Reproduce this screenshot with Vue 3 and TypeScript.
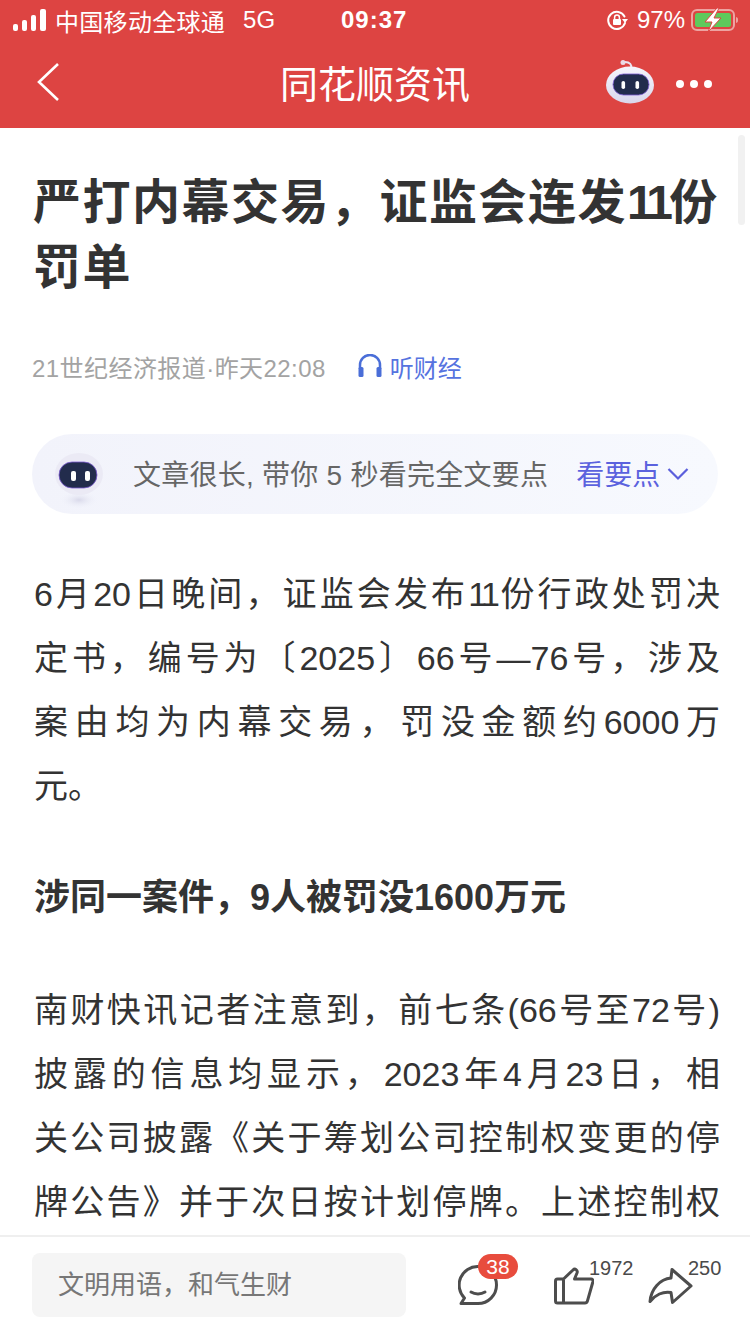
<script setup lang="ts">
const sections: { bold?: boolean; lines: string[] }[] = [
  {
    lines: [
      '6月20日晚间，证监会发布11份行政处罚决',
      '定书，编号为〔2025〕66号—76号，涉及',
      '案由均为内幕交易，罚没金额约6000万',
      '元。',
    ],
  },
  { bold: true, lines: ['涉同一案件，9人被罚没1600万元'] },
  {
    lines: [
      '南财快讯记者注意到，前七条(66号至72号)',
      '披露的信息均显示，2023年4月23日，相',
      '关公司披露《关于筹划公司控制权变更的停',
      '牌公告》并于次日按计划停牌。上述控制权',
    ],
  },
]

const isShort = (line: string) => line.length < 5
// "11" sets much tighter than the other digits in the reference
const parts = (line: string) => line.split(/(11)/)
</script>

<template>
  <div class="page">
    <header class="top">
      <div class="status">
        <div class="status-left">
          <svg class="signal" width="34" height="22" viewBox="0 0 34 22" fill="#fff">
            <rect x="0" y="15" width="5" height="7" rx="2" />
            <rect x="9" y="11" width="5" height="11" rx="2" />
            <rect x="18" y="6" width="5" height="16" rx="2" />
            <rect x="27" y="0" width="6" height="22" rx="2" />
          </svg>
          <span class="carrier">中国移动全球通</span>
          <span class="net">5G</span>
        </div>
        <span class="time">09:37</span>
        <div class="status-right">
          <svg class="lock" width="22" height="22" viewBox="0 0 22 22" fill="none">
            <path d="M18.500 7.500A8.600 8.600 0 1 0 19 14" stroke="#fff" stroke-width="2" stroke-linecap="round" />
            <path d="M16 10h6l-3 4z" fill="#fff" />
            <rect x="7" y="10" width="8" height="6" rx="1" fill="#fff" />
            <path d="M8.600 10V8.400a2.400 2.400 0 0 1 4.800 0V10" stroke="#fff" stroke-width="1.500" />
          </svg>
          <span class="pct">97%</span>
          <svg class="battery" width="48" height="24" viewBox="0 0 48 24" fill="none">
            <rect x="1" y="2" width="42" height="20" rx="5" stroke="#eda3a1" stroke-width="2" />
            <rect x="4" y="5" width="36" height="14" rx="2.500" fill="#5ec95c" />
            <path d="M45 9c1.800.4 2 1.500 2 3s-.2 2.600-2 3z" fill="#eda3a1" />
            <path d="M26 0 14 14h7l-4 10 13-14h-7l5-10z" fill="#fff" stroke="#dd4442" stroke-width="1" />
          </svg>
        </div>
      </div>
      <nav class="nav">
        <svg class="back" width="24" height="40" viewBox="0 0 24 40" fill="none">
          <path d="M22 2 3 20l19 18" stroke="#fff" stroke-width="2.600" />
        </svg>
        <h1 class="nav-title">同花顺资讯</h1>
        <div class="nav-right">
          <svg class="robot-small" width="48" height="44" viewBox="0 0 48 44">
            <defs>
              <linearGradient id="shell" x1="0" y1="0" x2="0" y2="1">
                <stop offset="0" stop-color="#f7f5fc" />
                <stop offset="1" stop-color="#d9d7ec" />
              </linearGradient>
            </defs>
            <path d="M25 8c1-3-1-6-6-6" stroke="#e9e5f2" stroke-width="2" fill="none" />
            <circle cx="17" cy="2.500" r="2.500" fill="#ecd9e4" />
            <ellipse cx="24" cy="25" rx="24" ry="18.500" fill="url(#shell)" />
            <rect x="7" y="14" width="36" height="21" rx="10.500" fill="#222c4c" stroke="#7b5bd0" stroke-width="0.800" />
            <rect x="15.500" y="21" width="3.600" height="8" rx="1.800" fill="#fff" />
            <rect x="29.500" y="21" width="3.600" height="8" rx="1.800" fill="#fff" />
          </svg>
          <div class="dots"><i></i><i></i><i></i></div>
        </div>
      </nav>
    </header>

    <main class="content">
      <div class="scrollbar"></div>
      <h2 class="title">严打内幕交易，证监会连发<span class="num">11</span>份<br />罚单</h2>
      <div class="meta">
        <span class="source">21世纪经济报道·昨天22:08</span>
        <svg class="phones" width="26" height="24" viewBox="0 0 26 24" fill="none">
          <path d="M3 15v-4a10 10 0 0 1 20 0v4" stroke="#4a6ed8" stroke-width="2.500" />
          <rect x="1.500" y="13" width="5" height="10" rx="1.500" fill="#4a6ed8" />
          <rect x="19.500" y="13" width="5" height="10" rx="1.500" fill="#4a6ed8" />
        </svg>
        <span class="listen">听财经</span>
      </div>

      <div class="summary">
        <svg class="robot-faint" width="48" height="62" viewBox="0 0 48 62">
          <defs>
            <radialGradient id="halo" cx="0.5" cy="0.5" r="0.5">
              <stop offset="0" stop-color="#d9d9ea" />
              <stop offset="1" stop-color="#f2f4fc" stop-opacity="0" />
            </radialGradient>
          </defs>
          <ellipse cx="24" cy="50" rx="20" ry="9" fill="url(#halo)" />
          <ellipse cx="24" cy="24" rx="24" ry="21" fill="#ebeaf5" />
          <rect x="4" y="12" width="38" height="26" rx="13" fill="#222c4c" stroke="#7b5bd0" stroke-width="0.800" />
          <rect x="16" y="21" width="5" height="10" rx="2" fill="#fff" />
          <rect x="30" y="21" width="5" height="10" rx="2" fill="#fff" />
        </svg>
        <span class="summary-text">文章很长, 带你 5 秒看完全文要点</span>
        <span class="summary-link">看要点</span>
        <svg class="chev" width="22" height="14" viewBox="0 0 22 14" fill="none">
          <path d="M1.500 2 11 11.500 20.500 2" stroke="#5b5fdc" stroke-width="2.200" />
        </svg>
      </div>

      <article class="article">
        <section v-for="(s, si) in sections" :key="si" class="para" :class="{ bold: s.bold }">
          <div
            v-for="(line, i) in s.lines"
            :key="i"
            class="line"
            :class="{ last: s.bold || isShort(line) }"
          ><span v-for="(p, pi) in parts(line)" :key="pi" :class="{ num: p === '11' }">{{ p }}</span></div>
        </section>
      </article>
    </main>

    <footer class="bar">
      <div class="input">文明用语，和气生财</div>
      <div class="action comment">
        <svg width="42" height="41" viewBox="0 0 42 41" fill="none">
          <path d="M20 1.500a18.500 18.500 0 1 1 0 37H3l3.500-5.500A18.500 18.500 0 0 1 20 1.500z" stroke="#4d4d4d" stroke-width="3" stroke-linejoin="round" />
          <path d="M13 27c4 2.500 10 2.500 14 0" stroke="#4d4d4d" stroke-width="3" stroke-linecap="round" />
        </svg>
        <span class="badge">38</span>
      </div>
      <div class="action like">
        <svg width="40" height="38" viewBox="0 0 40 38" fill="none" stroke="#4d4d4d" stroke-width="3" stroke-linejoin="round">
          <path d="M9.500 12H3.500a2 2 0 0 0-2 2v20a2 2 0 0 0 2 2H31a2.500 2.500 0 0 0 2.400-1.800L39 14.500a2 2 0 0 0-2-2.500H20.500l2.500-6c1-3-2-5-4-3L9.500 12v24" />
        </svg>
        <span class="count">1972</span>
      </div>
      <div class="action share">
        <svg width="45" height="38" viewBox="0 0 45 38" fill="none">
          <path d="M24 2.500 43 19 24.500 35.500 23 25.500C15 24 7 28 2 34.500 3 22 12 12 23 11z" stroke="#4d4d4d" stroke-width="3" stroke-linejoin="round" />
        </svg>
        <span class="count">250</span>
      </div>
    </footer>
  </div>
</template>

<style scoped>
.page {
  width: 750px;
  height: 1334px;
  display: flex;
  flex-direction: column;
  background: #fff;
  overflow: hidden;
  font-family: "Liberation Sans", "Noto Sans CJK SC", sans-serif;
}
.top {
  background: #dd4442;
  height: 128px;
  flex: none;
  color: #fff;
}
.status {
  height: 40px;
  display: flex;
  align-items: center;
  justify-content: space-between;
  padding: 0 11px 0 13px;
  position: relative;
  font-size: 24px;
}
.status-left {
  display: flex;
  align-items: center;
}
.carrier {
  margin-left: 8px;
  letter-spacing: 0.3px;
}
.net {
  margin-left: 18px;
}
.time {
  font-weight: 700;
  letter-spacing: 1px;
  position: absolute;
  left: 341px;
}
.status-right {
  display: flex;
  align-items: center;
}
.pct {
  margin: 0 6px 0 9px;
}
.nav {
  height: 88px;
  display: flex;
  align-items: center;
  justify-content: space-between;
  padding: 0 38px 4px 36px;
  box-sizing: border-box;
  position: relative;
}
.nav-title {
  position: absolute;
  left: 0;
  right: 0;
  margin: -2px 0 0;
  text-align: center;
  font-size: 38px;
  font-weight: 400;
}
.nav-right {
  display: flex;
  align-items: center;
  gap: 22px;
}
.dots {
  display: flex;
  gap: 6px;
  margin-top: 4px;
}
.dots i {
  width: 8px;
  height: 8px;
  border-radius: 50%;
  background: #fff;
}
.content {
  flex: 1;
  min-height: 0;
  overflow: hidden;
  position: relative;
  padding: 42px 30px 0 34px;
}
.scrollbar {
  position: absolute;
  top: 7px;
  right: 5px;
  width: 7px;
  height: 90px;
  border-radius: 4px;
  background: #f1f1f1;
}
.title {
  margin: 0 0 0 -1px;
  font-size: 48px;
  line-height: 65px;
  letter-spacing: 1.5px;
  font-weight: 700;
  color: #333;
  white-space: nowrap;
}
.num {
  letter-spacing: -0.1em;
  margin-right: 0.02em;
}
.meta {
  display: flex;
  align-items: center;
  margin: 46px 0 0 -2px;
  height: 40px;
}
.source {
  font-size: 24px;
  letter-spacing: 0.44px;
  color: #a3a3a3;
}
.phones {
  margin-left: 31px;
}
.listen {
  margin-left: 7px;
  font-size: 24px;
  color: #5673df;
}
.summary {
  margin-top: 48px;
  margin-left: -2px;
  width: 686px;
  height: 80px;
  border-radius: 40px;
  background: linear-gradient(90deg, #f2f3fb, #f7f9fe);
  display: flex;
  align-items: center;
  padding-left: 23px;
  box-sizing: border-box;
}
.robot-faint {
  margin-top: 14px;
}
.summary-text {
  margin: -2px 0 0 30px;
  font-size: 28px;
  letter-spacing: 0.25px;
  color: #666;
  white-space: nowrap;
}
.summary-link {
  margin: -2px 0 0 28px;
  font-size: 28px;
  color: #5b62de;
}
.chev {
  margin-left: 7px;
}
.article {
  margin-top: 48px;
  width: 686px;
}
.para {
  margin-bottom: 48px;
}
.line {
  font-size: 34px;
  line-height: 64px;
  color: #333;
  text-align: justify;
  text-align-last: justify;
}
.line.last {
  text-align-last: left;
}
.bold .line {
  font-weight: 700;
  font-size: 36px;
}
.bar {
  height: 99px;
  flex: none;
  border-top: 2px solid #efefef;
  box-sizing: border-box;
  background: #fff;
  display: flex;
  align-items: flex-start;
  position: relative;
  padding: 16px 0 0 32px;
}
.input {
  width: 374px;
  height: 64px;
  line-height: 64px;
  background: #f5f5f5;
  border-radius: 8px;
  padding-left: 26px;
  box-sizing: border-box;
  font-size: 26px;
  color: #777;
}
.action {
  position: relative;
  display: flex;
}
.comment {
  margin: 12px 0 0 52px;
}
.like {
  margin: 14px 0 0 54px;
}
.share {
  margin: 14px 0 0 54px;
}
.badge {
  position: absolute;
  left: 20px;
  top: -11px;
  width: 40px;
  height: 25px;
  border-radius: 13px;
  background: #e84c3d;
  color: #fff;
  font-size: 21px;
  line-height: 25px;
  text-align: center;
}
.count {
  position: absolute;
  left: 35px;
  top: -10px;
  font-size: 20px;
  color: #4a4a4a;
}
.share .count {
  left: 40px;
}
</style>
